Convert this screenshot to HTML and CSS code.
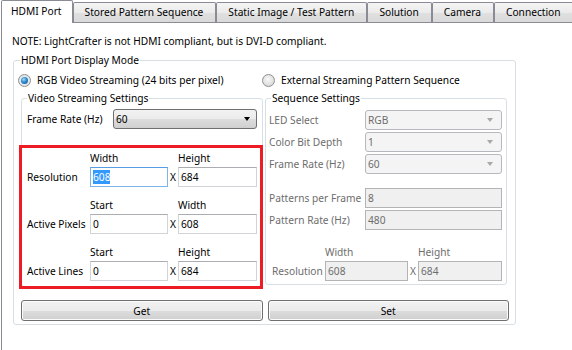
FILE: index.html
```html
<!DOCTYPE html>
<html lang="en">
<head>
    <meta charset="UTF-8">
    <meta name="viewport" content="width=device-width, initial-scale=1.0">
    <title>LightCrafter - HDMI Port</title>
    <link rel="stylesheet" href="styles.css">
</head>
<body>
    <div class="window">
        <ul class="tabs">
            <li class="tab active">HDMI Port</li>
            <li class="tab">Stored Pattern Sequence</li>
            <li class="tab">Static Image / Test Pattern</li>
            <li class="tab">Solution</li>
            <li class="tab">Camera</li>
            <li class="tab">Connection</li>
        </ul>

        <div class="pane">
            <p class="note">NOTE: LightCrafter is not HDMI compliant, but is DVI-D compliant.</p>

            <fieldset class="group mode-group">
                <legend>HDMI Port Display Mode</legend>

                <div class="radio-row">
                    <label class="radio checked"><span class="radio-mark"></span>RGB Video Streaming (24 bits per pixel)</label>
                    <label class="radio"><span class="radio-mark"></span>External Streaming Pattern Sequence</label>
                </div>

                <div class="columns">
                    <fieldset class="group video-group">
                        <legend>Video Streaming Settings</legend>
                        <div class="field-row video-row">
                            <span>Frame Rate (Hz)</span>
                            <div class="combo">60</div>
                        </div>

                        <!-- red annotation box from the original screenshot -->
                        <div class="highlight">
                            <div class="res-block">
                                <span class="head-a">Width</span>
                                <span class="head-b">Height</span>
                                <span>Resolution</span>
                                <div class="textbox focused"><span class="selected">608</span></div>
                                <span class="times">X</span>
                                <div class="textbox">684</div>
                            </div>
                            <div class="res-block">
                                <span class="head-a">Start</span>
                                <span class="head-b">Width</span>
                                <span>Active Pixels</span>
                                <div class="textbox">0</div>
                                <span class="times">X</span>
                                <div class="textbox">608</div>
                            </div>
                            <div class="res-block">
                                <span class="head-a">Start</span>
                                <span class="head-b">Height</span>
                                <span>Active Lines</span>
                                <div class="textbox">0</div>
                                <span class="times">X</span>
                                <div class="textbox">684</div>
                            </div>
                        </div>
                    </fieldset>

                    <fieldset class="group seq-group">
                        <legend>Sequence Settings</legend>
                        <div class="seq-rows">
                            <div class="field-row seq-row">
                                <span>LED Select</span>
                                <div class="combo disabled">RGB</div>
                            </div>
                            <div class="field-row seq-row">
                                <span>Color Bit Depth</span>
                                <div class="combo disabled">1</div>
                            </div>
                            <div class="field-row seq-row">
                                <span>Frame Rate (Hz)</span>
                                <div class="combo disabled">60</div>
                            </div>
                        </div>
                        <div class="seq-rows">
                            <div class="field-row seq-row">
                                <span>Patterns per Frame</span>
                                <div class="textbox disabled">8</div>
                            </div>
                            <div class="field-row seq-row">
                                <span>Pattern Rate (Hz)</span>
                                <div class="textbox disabled">480</div>
                            </div>
                        </div>
                        <div class="res-block seq-res">
                            <span class="head-a">Width</span>
                            <span class="head-b">Height</span>
                            <span>Resolution</span>
                            <div class="textbox disabled">608</div>
                            <span class="times">X</span>
                            <div class="textbox disabled">684</div>
                        </div>
                    </fieldset>
                </div>

                <div class="actions">
                    <button class="btn">Get</button>
                    <button class="btn">Set</button>
                </div>
            </fieldset>
        </div>
    </div>
</body>
</html>
```

FILE: styles.css
```css
* {
    margin: 0;
    padding: 0;
    box-sizing: border-box;
}

body {
    background: #fff;
    color: #000;
    font-family: "Noto Sans", "Open Sans", sans-serif;
    font-size: 10.2px;
    line-height: 14px;
}

.window {
    padding-left: 1px;
}

/* tab strip */
.tabs {
    display: flex;
    align-items: flex-end;
    height: 22px;
    list-style: none;
    position: relative;
    z-index: 1;
}

.tab {
    height: 20px;
    padding: 0 12px 0 11px;
    line-height: 19px;
    border: 1px solid #898c95;
    border-bottom: none;
    border-radius: 2px 2px 0 0;
    background: linear-gradient(#f4f4f4, #ebebeb 50%, #e0e0e0 51%, #d9d9d9);
    white-space: nowrap;
}

.tab.active {
    height: 23px;
    margin-bottom: -1px;
    padding: 0 10px 0 9px;
    line-height: 20px;
    background: #fff;
}

.pane {
    min-height: 328px;
    padding: 11px 0 0 10px;
    border-top: 1px solid #898c95;
    border-left: 1px solid #898c95;
}

/* group boxes */
.group {
    border: 1px solid #d5dfe5;
    border-radius: 3px;
    min-width: 0;
}

.group legend {
    padding: 0 1px;
    margin-left: 5px;
}

.mode-group {
    width: 503px;
    margin: 5px 0 0 1px;
    padding: 6px 8px 3px 7px;
}

.mode-group > legend {
    margin-left: -1px;
}

.radio-row {
    display: grid;
    grid-template-columns: 242px 242px;
    column-gap: 2px;
    margin-left: -3px;
}

.radio {
    display: flex;
    align-items: center;
    gap: 6px;
    height: 14px;
}

.radio-mark {
    width: 13px;
    height: 13px;
    border: 1px solid #8e8f8f;
    border-radius: 50%;
    background: radial-gradient(circle at 45% 40%, #f8f8f8, #dcdcdc 70%, #c9c9c9);
    display: flex;
    align-items: center;
    justify-content: center;
}

.radio.checked .radio-mark {
    background: radial-gradient(circle, #f4f4f4, #d9dfe4);
}

.radio.checked .radio-mark::after {
    content: "";
    width: 7px;
    height: 7px;
    border-radius: 50%;
    background: radial-gradient(circle at 40% 35%, #a6dcf8, #2c89d0 45%, #13518f);
}

.columns {
    display: grid;
    grid-template-columns: 242px 242px;
    column-gap: 2px;
    align-items: start;
    margin-top: 4px;
}

.video-group {
    padding-top: 4px;
}

.field-row {
    display: grid;
    align-items: center;
    height: 20px;
}

.video-row {
    grid-template-columns: 86px 144px;
    padding: 0 5px;
}

/* controls */
.combo {
    position: relative;
    height: 20px;
    padding-left: 2px;
    line-height: 18px;
    border: 1px solid #707070;
    border-radius: 3px;
    background: linear-gradient(#f2f2f2, #ebebeb 50%, #dddddd 51%, #cfcfcf);
}

.combo::after {
    content: "";
    position: absolute;
    right: 6px;
    top: 7px;
    border-style: solid;
    border-width: 4px 3.5px 0;
    border-color: #000 transparent transparent;
}

.combo.disabled {
    background: #f4f4f4;
    border-color: #b5b9bd;
    color: #6d6d6d;
}

.combo.disabled::after {
    right: 8px;
    border-color: #a8a8a8 transparent transparent;
}

.textbox {
    height: 20px;
    padding: 0 2px;
    line-height: 18px;
    background: #fff;
    border: 1px solid #d0d4d9;
    border-top-color: #abadb3;
}

.textbox.focused {
    border-color: #7eb4ea;
    border-top-color: #569de5;
}

.textbox.disabled {
    background: #f0f0f0;
    border-color: #b4b4b4;
    color: #6d6d6d;
}

.selected {
    background: #3399ff;
    color: #fff;
}

.highlight {
    display: flex;
    flex-direction: column;
    gap: 11px;
    margin: 16px -1px -3px -3px;
    padding: 3px 3px 5px 5px;
    border: 3px solid #ed1c24;
}

.res-block {
    display: grid;
    grid-template-columns: 63px 78px 10px 79px;
    grid-template-rows: 14px 20px;
    row-gap: 2px;
    align-items: center;
}

.head-a {
    grid-column: 2;
}

.head-b {
    grid-column: 4;
}

.times {
    text-align: center;
}

.seq-group {
    padding: 5px 0 3px;
}

.seq-rows {
    display: flex;
    flex-direction: column;
    gap: 2px;
}

.seq-rows + .seq-rows {
    margin-top: 14px;
}

.seq-row {
    grid-template-columns: 96px 137px;
    padding: 0 4px 0 3px;
}

.seq-row > span {
    color: #6d6d6d;
}

.seq-res {
    grid-template-columns: 53px 83px 10px 84px;
    margin-top: 15px;
    padding: 0 4px 0 6px;
    color: #6d6d6d;
}

/* buttons */
.actions {
    display: grid;
    grid-template-columns: 1fr 1fr;
    gap: 5px;
    margin: 13px -2px 0 0;
}

.btn {
    height: 21px;
    font: inherit;
    color: #000;
    border: 1px solid #707070;
    border-radius: 3px;
    background: linear-gradient(#f2f2f2, #ebebeb 50%, #dddddd 51%, #cfcfcf);
    box-shadow: inset 0 0 0 1px #fbfbfb;
}
```
